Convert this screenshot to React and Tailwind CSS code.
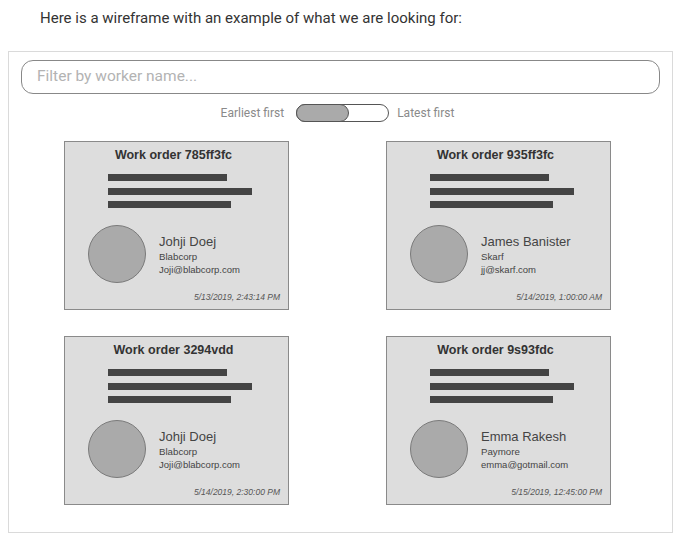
import React from "react";

const orders = [
  { id: "785ff3fc", name: "Johji Doej", company: "Blabcorp", email: "Joji@blabcorp.com", date: "5/13/2019, 2:43:14 PM" },
  { id: "935ff3fc", name: "James Banister", company: "Skarf", email: "jj@skarf.com", date: "5/14/2019, 1:00:00 AM" },
  { id: "3294vdd", name: "Johji Doej", company: "Blabcorp", email: "Joji@blabcorp.com", date: "5/14/2019, 2:30:00 PM" },
  { id: "9s93fdc", name: "Emma Rakesh", company: "Paymore", email: "emma@gotmail.com", date: "5/15/2019, 12:45:00 PM" },
];

function Card({ o }) {
  return (
    <div className="w-[225px] border border-[#8a8a8a] bg-[#dddddd] pt-[6px] pb-[7px] font-['Liberation_Sans',Arial,sans-serif]">
      <div className="text-center text-[12.5px] leading-[15px] font-bold text-[#333] pr-[6px]">Work order {o.id}</div>
      <div className="pl-[43px] mt-[11px] flex flex-col">
        <div className="h-[7px] w-[119px] bg-[#444]" />
        <div className="h-[7px] w-[144px] bg-[#444] mt-[7px]" />
        <div className="h-[7px] w-[123px] bg-[#444] mt-[6px]" />
      </div>
      <div className="flex mt-[17px] pl-[23px]">
        <div className="w-[58px] h-[58px] rounded-full bg-[#aaaaaa] border border-[#7a7a7a] shrink-0" />
        <div className="ml-[13px] mt-[10px] flex flex-col">
          <div className="text-[13px] leading-[14px] text-[#444]">{o.name}</div>
          <div className="mt-[1px] text-[9.7px] leading-[13px] text-[#444]">{o.company}</div>
          <div className="text-[9.5px] leading-[14px] text-[#444]">{o.email}</div>
        </div>
      </div>
      <div className="mt-[9px] pr-[8px] text-right italic text-[8.5px] leading-[10px] text-[#555]">{o.date}</div>
    </div>
  );
}

export default function App() {
  return (
    <div className="bg-white w-[681px] h-[544px] font-['Roboto',sans-serif]">
      <div className="pt-[8px] pl-[40px] text-[15px] leading-[20px] text-[#333]">
        Here is a wireframe with an example of what we are looking for:
      </div>
      <div className="mx-2 mt-[23px] border border-[#dadada] px-3 pt-2 pb-[27px]">
        <div className="h-[34px] rounded-[12px] border border-[#888] flex items-center pl-[15px] text-[15.5px] text-[#b3b3b3]">
          Filter by worker name...
        </div>
        <div className="mt-[10px] h-[18px] flex items-center justify-center pr-[6px] text-[12px] text-[#8a8a8a]">
          <span>Earliest first</span>
          <div className="ml-[12px] w-[93px] h-[18px] rounded-full border border-[#555] bg-white flex">
            <div className="w-[53px] h-[18px] -mt-px -ml-px rounded-full border border-[#555] bg-[#aaaaaa]" />
          </div>
          <span className="ml-[8px]">Latest first</span>
        </div>
        <div className="mt-[19px] pl-[43px] grid grid-cols-[225px_225px] gap-x-[97px] gap-y-[26px]">
          {orders.map((o) => (
            <Card key={o.id} o={o} />
          ))}
        </div>
      </div>
    </div>
  );
}
